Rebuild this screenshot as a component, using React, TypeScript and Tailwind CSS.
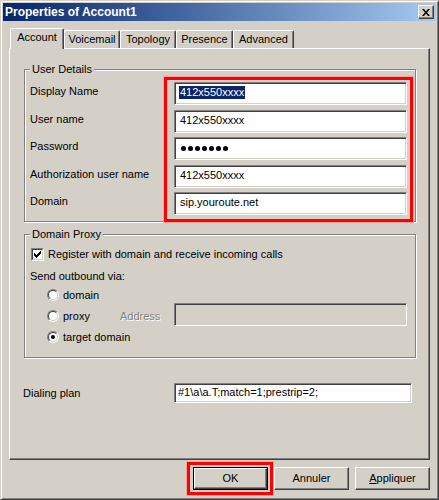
import React from 'react';

const font = "font-['Liberation_Sans',Arial,sans-serif]";
const sunken =
  'border border-t-[#808080] border-l-[#808080] border-r-white border-b-white shadow-[inset_1px_1px_0_#404040,inset_-1px_-1px_0_#d4d0c8]';
const raised =
  'border border-t-white border-l-white border-r-[#404040] border-b-[#404040] shadow-[inset_-1px_-1px_0_#808080,inset_1px_1px_0_#d4d0c8]';
const groupBox =
  'relative border border-[#808080] shadow-[inset_1px_1px_0_#ffffff,1px_1px_0_#ffffff]';

const Field = ({ value, selected }: { value: string; selected?: boolean }) => (
  <div className={`h-[23px] w-[233px] bg-white ${sunken} flex items-center pl-[4px] pb-[2px]`}>
    <span className={selected ? 'bg-[#0a246a] text-white px-[1px] leading-[13px]' : 'px-[1px] leading-[13px]'}>
      {value}
    </span>
  </div>
);

const Radio = ({ checked }: { checked?: boolean }) => (
  <div className="w-[12px] h-[12px] rounded-full border border-t-[#808080] border-l-[#808080] border-r-white border-b-white">
    <div className="w-[10px] h-[10px] rounded-full bg-white border border-t-[#404040] border-l-[#404040] border-r-[#d4d0c8] border-b-[#d4d0c8] flex items-center justify-center">
      {checked && <div className="w-[4px] h-[4px] rounded-full bg-black" />}
    </div>
  </div>
);

const Tab = ({ label, width, active }: { label: string; width: string; active?: boolean }) => (
  <div
    className={`${width} ${
      active ? 'h-[21px] -mb-[1px] z-10 pb-[3px]' : 'h-[18px] pb-[1px]'
    } relative bg-[#d4d0c8] border-l border-t border-white border-r border-r-[#404040] shadow-[inset_-1px_0_0_#808080] rounded-tl-[2px] rounded-tr-[2px] flex items-center justify-center`}
  >
    {label}
  </div>
);

export default function App() {
  const labels = ['Display Name', 'User name', 'Password', 'Authorization user name', 'Domain'];

  return (
    <div
      className={`w-[439px] h-[500px] bg-[#d4d0c8] border border-t-[#d4d0c8] border-l-[#d4d0c8] border-r-[#404040] border-b-[#404040] shadow-[inset_1px_1px_0_#ffffff,inset_-1px_-1px_0_#808080] p-[2px] flex flex-col text-[11px] text-black ${font}`}
    >
      {/* title bar */}
      <div className="h-[18px] shrink-0 flex items-center justify-between bg-linear-to-r from-[#0a246a] to-[#a6caf0] pl-[2px] pr-[2px]">
        <span className="font-bold text-white text-[12px] leading-[14px]">Properties of Account1</span>
        <div className={`w-[16px] h-[14px] ${raised} bg-[#d4d0c8] flex items-center justify-center`}>
          <svg width="8" height="7" viewBox="0 0 8 7">
            <path d="M0 0h2l2 2.5L6 0h2L5 3.5 8 7H6L4 4.5 2 7H0l3-3.5z" fill="#000" />
          </svg>
        </div>
      </div>

      {/* tabs */}
      <div className="mt-[7px] ml-[7px] h-[20px] flex items-end shrink-0">
        <Tab label="Account" width="w-[54px]" active />
        <Tab label="Voicemail" width="w-[56px]" />
        <Tab label="Topology" width="w-[56px]" />
        <Tab label="Presence" width="w-[57px]" />
        <Tab label="Advanced" width="w-[61px]" />
      </div>

      {/* tab panel */}
      <div className="ml-[6px] w-[421px] h-[412px] shrink-0 border border-t-white border-l-white border-r-[#404040] border-b-[#404040] shadow-[inset_-1px_-1px_0_#808080] flex flex-col">
        {/* User Details */}
        <div className={`${groupBox} ml-[14px] mt-[20px] w-[392px] h-[153px] flex`}>
          <span className="absolute left-[5px] -top-[7px] px-[2px] bg-[#d4d0c8] leading-[13px]">User Details</span>
          <div className="w-[139px] pl-[5px] mt-[10px] flex flex-col gap-[4.5px]">
            {labels.map((l) => (
              <div key={l} className="h-[23px] flex items-center">
                {l}
              </div>
            ))}
          </div>
          <div className="mt-[7px] h-[145px] w-[249px] border-[3px] border-[#ff0000] shadow-[0_0_0_1px_#f7a0a0] pt-[2px] pl-[7px] flex flex-col gap-[4.5px] relative">
            <Field value="412x550xxxx" selected />
            <Field value="412x550xxxx" />
            <div className={`h-[23px] w-[233px] bg-white ${sunken} flex items-center gap-[2px] pl-[6px] pb-[1px]`}>
              {Array.from({ length: 7 }).map((_, i) => (
                <div key={i} className="w-[5px] h-[5px] rounded-full bg-black" />
              ))}
            </div>
            <Field value="412x550xxxx" />
            <Field value="sip.youroute.net" />
          </div>
        </div>

        {/* Domain Proxy */}
        <div className={`${groupBox} ml-[14px] mt-[12px] w-[392px] h-[124px] flex flex-col`}>
          <span className="absolute left-[5px] -top-[7px] px-[2px] bg-[#d4d0c8] leading-[13px]">Domain Proxy</span>
          <div className="mt-[13px] pl-[6px] h-[13px] flex items-center gap-[4px]">
            <div className="w-[13px] h-[13px] border border-t-[#808080] border-l-[#808080] border-r-white border-b-white">
              <div className="w-[11px] h-[11px] bg-white border border-t-[#404040] border-l-[#404040] border-r-[#d4d0c8] border-b-[#d4d0c8] flex items-center justify-center">
                <svg width="7" height="7" viewBox="0 0 7 7">
                  <path d="M0 2h1v1h1v1h1V3h1V2h1V1h1V0h1v3H6v1H5v1H4v1H3v1H2V6H1V5H0z" fill="#000" />
                </svg>
              </div>
            </div>
            <span className="leading-[13px]">Register with domain and receive incoming calls</span>
          </div>
          <div className="mt-[9px] pl-[5px] h-[13px] leading-[13px]">Send outbound via:</div>
          <div className="mt-[1.5px] pl-[22px] flex flex-col">
            <div className="h-[21px] flex items-center gap-[4px]">
              <Radio />
              <span>domain</span>
            </div>
            <div className="h-[21px] flex items-center">
              <div className="w-[73px] flex items-center gap-[4px]">
                <Radio />
                <span>proxy</span>
              </div>
              <span className="w-[54px] text-[#808080] [text-shadow:1px_1px_0_#ffffff]">Address</span>
              <div className={`h-[23px] w-[233px] mb-[3px] bg-[#d4d0c8] ${sunken}`} />
            </div>
            <div className="h-[21px] flex items-center gap-[4px]">
              <Radio checked />
              <span>target domain</span>
            </div>
          </div>
        </div>

        {/* Dialing plan */}
        <div className="mt-[25px] h-[20px] flex items-center">
          <span className="w-[164px] pl-[13px]">Dialing plan</span>
          <div className={`h-[20px] w-[238px] bg-white ${sunken} flex items-center pl-[3px] pb-[1px]`}>
            <span className="leading-[13px]">{'#1\\a\\a.T;match=1;prestrip=2;'}</span>
          </div>
        </div>
      </div>

      {/* buttons */}
      <div className="mt-[2px] ml-[184px] flex items-center">
        <div className="w-[86px] h-[33px] border-[3px] border-[#ff0000] shadow-[0_0_0_1px_#f7a0a0] pt-[2px] pl-[3px]">
          <div className="w-[75px] h-[23px] border border-black">
            <div className={`w-full h-full ${raised} flex items-center justify-center`}>OK</div>
          </div>
        </div>
        <div className={`ml-[1px] w-[75px] h-[23px] ${raised} flex items-center justify-center`}>Annuler</div>
        <div className={`ml-[6px] w-[75px] h-[23px] ${raised} flex items-center justify-center`}>
          <span>
            <span className="underline">A</span>ppliquer
          </span>
        </div>
      </div>
    </div>
  );
}
